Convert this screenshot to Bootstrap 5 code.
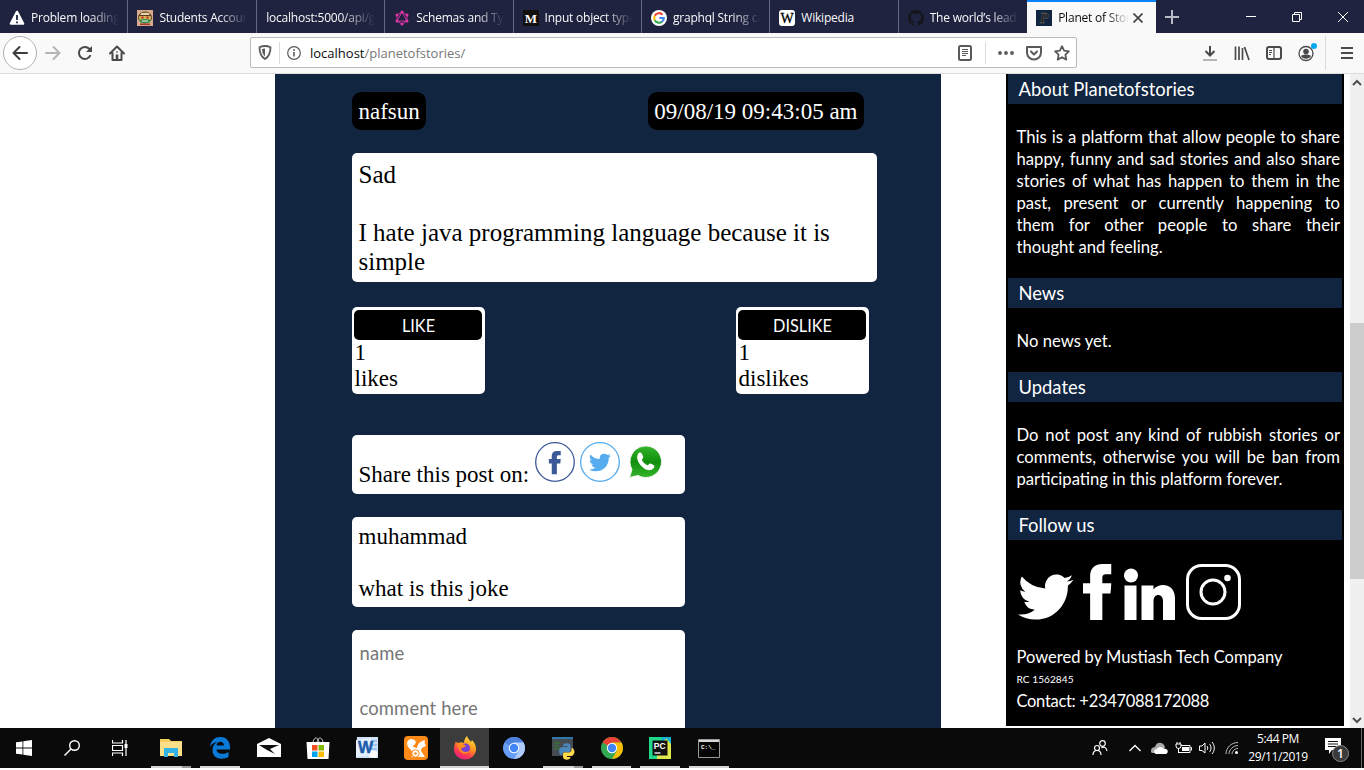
<!DOCTYPE html>
<html lang="en">
<head>
<meta charset="utf-8">
<title>Planet of Stories</title>
<link href="https://cdn.jsdelivr.net/npm/bootstrap@5.3.0/dist/css/bootstrap.min.css" rel="stylesheet">
<script src="https://cdn.jsdelivr.net/npm/bootstrap@5.3.0/dist/js/bootstrap.bundle.min.js"></script>
<style>
:root{--navy:#112540;--chrome:#f9f9fa;--ui:"Open Sans","Noto Sans",sans-serif;--body:Lato,"Open Sans",sans-serif;--serif:"Liberation Serif",serif}
body{width:1364px;height:770px;overflow:hidden;background:#fff;font-family:var(--ui);color:#000}
svg{display:block;flex:none}
.tabstrip{height:33px;background:#202340}
.tab-item{width:128.4px;height:33px;padding:2px 0 0 9px;color:#f9f9fa;font-size:12px;border-right:1px solid #666880}
.tab-item span{flex:1;min-width:0;margin-left:6px;margin-right:9px;white-space:nowrap;overflow:hidden;letter-spacing:-.22px;-webkit-mask-image:linear-gradient(90deg,#000 68%,transparent 100%);mask-image:linear-gradient(90deg,#000 68%,transparent 100%)}
.tab-item span.whole{-webkit-mask-image:none;mask-image:none}
.tab-item.current{background:var(--chrome);color:#0c0c0d;border-right:0;box-shadow:inset 0 2px #0a84ff}
.tab-item.before{border-right:0}
.tab-item.current span{margin-right:4px}
.tab-item.current .close-x{margin-right:13px}
.win-btns{gap:36px;margin-right:16px}
.toolbar{height:41px;background:var(--chrome);border-bottom:1px solid #dcdcde}
.tool{width:32px;height:32px}
.back-btn{width:34px;height:34px;border:1px solid #b1b1b3;border-radius:50%;background:#fff;margin-left:3px}
.address{width:827px;height:31px;border:1px solid #bbb;border-radius:2px;background:#fff;margin-left:117px;margin-bottom:1px}
.rule{width:1px;height:22px;background:#dadadc}
.rule.tall{height:34px;margin:0 5px 0 3px}
.url{font-size:13px;color:#777;margin:2px 0 0 9px}
.url b{font-weight:400;color:#0c0c0d}
.viewport{height:654px;overflow:hidden}
.story-col{width:666px;margin-left:275px;padding:18px 64px 0 77px;background:var(--navy);font-family:var(--serif);font-size:23px;line-height:26px}
.tag{height:38px;padding:7px 6.5px;background:#000;color:#fff;border-radius:9px}
.panel{background:#fff;border-radius:5px}
.post{height:129px;margin-top:23px;padding:7px 6.5px;font-size:25px;line-height:29px}
.vote{width:133px;height:87px;padding:3px 2.5px 0}
.vote button{display:block;width:128px;height:30px;margin-left:-.5px;border:0;border-radius:5px;background:#000;color:#fff;font:16.3px/31px var(--body);padding:0 0 0 1px}
.share{width:333px;height:59px;margin-top:41px;padding:7px 6.5px}
.share svg+svg{margin-left:5px}
.remark{width:333px;height:90px;margin-top:23px;padding:7px 6.5px}
.reply{width:333px;height:200px;margin-top:23px;padding:10px 7.5px;font:18.4px/26px var(--body)}
.reply input{display:block;border:0;padding:0;height:26px;width:300px;margin-bottom:29px;outline:0;letter-spacing:.15px}
.reply input::placeholder{color:#757575;opacity:1}
.about-col{width:338px;height:652px;margin-left:65px;background:#000;color:#fff;font-family:var(--body);font-size:16.65px;line-height:22px;padding:0 2px}
.about-col h2{height:30px;margin:0;padding-left:10.5px;background:var(--navy);font-size:18.4px;font-weight:400;line-height:31px}
.about-col p{margin:0;padding:22px 2px 20px 8.5px;text-align:justify}
.credits{padding:26px 8.5px 0;font-size:16.5px}
.credits .reg{font-size:10.2px;line-height:23px}
.credits .phone{letter-spacing:-.3px;line-height:20px}
.scroll{width:14px;margin-left:6px;background:#f0f0f0}
.scroll .thumb{height:256px;background:#cdcdcd;margin-top:236px}
.taskbar{height:40px;background:#0a0a0a;color:#fff}
.app{width:48.95px;height:40px;position:relative}
.app.run::after{content:"";position:absolute;left:4.5px;right:4.5px;bottom:0;height:2px;background:#d5d5d5}
.app.stack::after{background:linear-gradient(90deg,#d5d5d5 78%,#999 78%)}
.app.front{background:#3c3c3c}
.app.front::after{left:0;right:0}
.clock{font-size:12px;line-height:18px;letter-spacing:-.42px;width:66px}
</style>
</head>
<body class="d-flex flex-column">
<svg width="0" height="0" class="position-absolute">
<symbol id="bird" viewBox="0 2 16 13"><path d="M5.026 15c6.038 0 9.341-5.003 9.341-9.334 0-.14 0-.282-.006-.422A6.685 6.685 0 0 0 16 3.542a6.658 6.658 0 0 1-1.889.518 3.301 3.301 0 0 0 1.447-1.817 6.533 6.533 0 0 1-2.087.793A3.286 3.286 0 0 0 7.875 6.03a9.325 9.325 0 0 1-6.767-3.429 3.289 3.289 0 0 0 1.018 4.382A3.323 3.323 0 0 1 .64 6.575v.045a3.288 3.288 0 0 0 2.632 3.218 3.203 3.203 0 0 1-.865.115 3.23 3.23 0 0 1-.614-.057 3.283 3.283 0 0 0 3.067 2.277A6.588 6.588 0 0 1 .78 13.58a6.32 6.32 0 0 1-.78-.045A9.344 9.344 0 0 0 5.026 15z"/></symbol>
<symbol id="fb" viewBox="0 0 28 55"><path d="M7 55V29H0V19h7v-7C7 4 12 0 19 0h9v10h-5c-3 0-4 1-4 4v5h9l-1 10h-8v26z"/></symbol>
</svg>

<nav class="tabstrip d-flex flex-shrink-0">
<div class="tab-item d-flex align-items-center"><svg width="16" height="16" viewBox="0 0 16 16"><path d="M8 2 14 13.5H2z" fill="#fff" stroke="#fff" stroke-width="2.6" stroke-linejoin="round"/><path d="M8 5v5M8 11.6v1.6" stroke="#202340" stroke-width="1.8"/></svg><span>Problem loading page</span></div>
<div class="tab-item d-flex align-items-center"><svg width="16" height="16" viewBox="0 0 16 16"><path fill="#d9a98b" d="M0 0h16v16H0z"/><ellipse cx="8" cy="7.500" rx="6.500" ry="5.500" fill="#d9b45e" stroke="#4d3b25"/><path d="M2 5.500h12" stroke="#5b3a22"/><path d="M4 4h8" stroke="#e8e0c0" stroke-width="1.5"/><circle cx="5.500" cy="7.500" r="1.300" fill="#b9442f"/><circle cx="10.500" cy="7.500" r="1.300" fill="#b9442f"/><path d="M2 10c3-1.500 9-1.500 12 0l-2 3H4z" fill="#3d8f4a"/><path d="M5 11h6" stroke="#e9efe0"/><path d="M3 14.300h10" stroke="#a43b2c" stroke-width="1.500"/></svg><span>Students Accounts</span></div>
<div class="tab-item d-flex align-items-center"><span style="margin-left:.5px">localhost:5000/api/graphql</span></div>
<div class="tab-item d-flex align-items-center"><svg width="16" height="16" viewBox="0 0 16 16" fill="#e535ab" stroke="#e535ab"><path d="M8 2 13 5v6l-5 3-5-3V5zM8 2l5 9H3z" fill="none" stroke-width=".9"/><g stroke="none"><circle cx="8" cy="2" r="1.5"/><circle cx="13" cy="5" r="1.5"/><circle cx="13" cy="11" r="1.5"/><circle cx="8" cy="14" r="1.5"/><circle cx="3" cy="11" r="1.5"/><circle cx="3" cy="5" r="1.5"/></g></svg><span>Schemas and Types</span></div>
<div class="tab-item d-flex align-items-center"><svg width="16" height="16"><path d="M0 0h16v16H0z" fill="#12100e"/><text x="8" y="12.5" text-anchor="middle" font-family="Liberation Serif" font-weight="700" font-size="13" fill="#fff">M</text></svg><span>Input object types</span></div>
<div class="tab-item d-flex align-items-center"><svg width="16" height="16" viewBox="0 0 16 16" fill="none" stroke-width="2.2"><circle cx="8" cy="8" r="8" fill="#fff"/><path d="M11.5 4.7A4.8 4.8 0 0 0 3.8 5.7" stroke="#ea4335"/><path d="M3.8 5.7a4.8 4.8 0 0 0 0 4.6" stroke="#fbbc05"/><path d="M3.8 10.3a4.8 4.8 0 0 0 7.4 1.2" stroke="#34a853"/><path d="M11.2 11.5A4.8 4.8 0 0 0 12.8 8H8.3" stroke="#4285f4"/></svg><span>graphql String cannot represent</span></div>
<div class="tab-item d-flex align-items-center"><svg width="16" height="16"><rect width="16" height="16" rx="3" fill="#fff"/><text x="8" y="12.6" text-anchor="middle" font-family="Liberation Serif" font-size="14" fill="#000" stroke="#000" stroke-width=".3">W</text></svg><span class="whole">Wikipedia</span></div>
<div class="tab-item before d-flex align-items-center"><svg width="16" height="16" viewBox="0 0 16 16" fill="#15161c"><path d="M8 0C3.58 0 0 3.58 0 8c0 3.54 2.29 6.53 5.47 7.59.4.07.55-.17.55-.38 0-.19-.01-.82-.01-1.49-2.01.37-2.53-.49-2.69-.94-.09-.23-.48-.94-.82-1.13-.28-.15-.68-.52-.01-.53.63-.01 1.08.58 1.23.82.72 1.21 1.87.87 2.33.66.07-.52.28-.87.51-1.07-1.78-.2-3.64-.89-3.64-3.95 0-.87.31-1.59.82-2.15-.08-.2-.36-1.02.08-2.12 0 0 .67-.21 2.2.82.64-.18 1.32-.27 2-.27.68 0 1.36.09 2 .27 1.53-1.04 2.2-.82 2.2-.82.44 1.1.16 1.92.08 2.12.51.56.82 1.27.82 2.15 0 3.07-1.87 3.75-3.65 3.95.29.25.54.73.54 1.48 0 1.07-.01 1.93-.01 2.2 0 .21.15.46.55.38A8.012 8.012 0 0 0 16 8c0-4.42-3.58-8-8-8z"/></svg><span>The world’s leading</span></div>
<div class="tab-item current d-flex align-items-center"><svg width="16" height="16"><path d="M0 0h16v16H0z" fill="#112540"/><text x="8" y="13" text-anchor="middle" font-family="Liberation Serif" font-weight="700" font-style="italic" font-size="14" fill="#1d1c1a" stroke="#77736a" stroke-width=".4">P</text></svg><span>Planet of Stories</span><svg class="close-x" width="10" height="10"><path d="m.500.500 9 9M9.500.500l-9 9" stroke="#444" stroke-width="1.7"/></svg></div>
<div class="d-flex align-items-center flex-grow-1"><svg class="ms-2" width="16" height="16"><path d="M8 1v14M1 8h14" stroke="#b9bac6" stroke-width="2"/></svg>
<div class="win-btns ms-auto d-flex align-items-center"><svg width="10" height="10"><path d="M0 4.500h10" stroke="#fff"/></svg><svg width="10" height="10" fill="none" stroke="#fff"><path d="M.5 2.500h7v7h-7zM2.500 2.500v-2h7v7h-2"/></svg><svg width="10" height="10"><path d="m0 0 10 10M10 0 0 10" stroke="#fff"/></svg></div></div>
</nav>

<div class="toolbar d-flex align-items-center flex-shrink-0">
<div class="back-btn d-flex align-items-center justify-content-center"><svg width="16" height="16" fill="none" stroke="#3d3d40" stroke-width="2" stroke-linecap="round" stroke-linejoin="round"><path d="M15 8H1.500M7.500 2 1.500 8l6 6"/></svg></div>
<div class="tool d-flex align-items-center justify-content-center"><svg width="16" height="16" fill="none" stroke="#b5b5b8" stroke-width="2" stroke-linecap="round" stroke-linejoin="round"><path d="M1 8h13.500M8.500 2l6 6-6 6"/></svg></div>
<div class="tool d-flex align-items-center justify-content-center"><svg width="16" height="16" fill="none" stroke="#4a4a4d" stroke-width="2"><path d="M13.500 10.200A6 6 0 1 1 12.300 3.800L14 6"/><path d="M15 1v6H9z" fill="#4a4a4d" stroke="none"/></svg></div>
<div class="tool d-flex align-items-center justify-content-center"><svg width="16" height="16" fill="none" stroke="#4a4a4d" stroke-width="2" stroke-linejoin="round"><path d="M1 8.500 8 1.500l7 7M3.500 8v7h9V8" stroke-linecap="round"/><path d="M8 9.500V15" stroke-width="2.600"/><path d="M7 7h2" stroke-width="1"/></svg></div>
<div class="address d-flex align-items-center">
<svg width="14" height="15" style="margin-left:7px" viewBox="0 0 14 15"><path d="M7 1c2 0 4 .5 5.500 1.200 0 5-.8 9-5.500 11.800C2.300 11.200 1.500 7.200 1.500 2.200 3 1.500 5 1 7 1z" fill="none" stroke="#5a5a5d" stroke-width="1.800"/><path d="M7 3.500v8c-2-1.600-3-4-3-7.400z" fill="#5a5a5d"/></svg>
<div class="rule" style="margin-left:7px"></div>
<svg width="14" height="14" style="margin-left:7px" fill="none" stroke="#5a5a5d"><circle cx="7" cy="7" r="6.300" stroke-width="1.200"/><path d="M7 6v4.500M7 3.300v1.600" stroke-width="1.600"/></svg>
<div class="url"><b>localhost</b>/planetofstories/</div>
<div class="ms-auto d-flex align-items-center" style="margin-right:6px">
<svg width="14" height="16" fill="none" stroke="#5a5a5d"><rect x="1" y="1" width="12" height="14" rx="1.500" stroke-width="2"/><path d="M4 4.500h6M4 6.500h6M4 8.500h6M4 10.500h4"/></svg>
<div class="rule" style="margin:0 12px 0 13px"></div>
<svg width="16" height="16" fill="#5a5a5d"><circle cx="2" cy="8" r="1.900"/><circle cx="8" cy="8" r="1.900"/><circle cx="14" cy="8" r="1.900"/></svg>
<svg style="margin:0 12px" width="16" height="16" fill="none" stroke="#5a5a5d" stroke-width="2" stroke-linecap="round" stroke-linejoin="round"><path d="M1 2h14v5.500a7 7 0 0 1-14 0z"/><path d="m5 6.500 3 3 3-3"/></svg>
<svg width="16" height="16" fill="none" stroke="#5a5a5d" stroke-width="1.800" stroke-linejoin="round"><path d="m8 1.200 2.100 4.500 4.800.6-3.500 3.400.9 4.900L8 12.200l-4.300 2.400.9-4.900L1.100 6.300l4.800-.6z"/></svg></div>
</div>
<div class="ms-auto d-flex align-items-center">
<div class="tool d-flex align-items-center justify-content-center"><svg width="16" height="16" fill="none" stroke="#4a4a4d" stroke-width="2"><path d="M8 1v9M3.500 6 8 10.500 12.500 6"/><path d="M1 15h14" stroke="#b5b5b8"/></svg></div>
<div class="tool d-flex align-items-center justify-content-center"><svg width="16" height="16" fill="none" stroke="#4a4a4d" stroke-width="1.700"><path d="M1.500 1.500V15M5 1.500V15M8.500 3v12M10.500 2l4.500 13"/></svg></div>
<div class="tool d-flex align-items-center justify-content-center"><svg width="16" height="14" fill="none" stroke="#4a4a4d"><rect x="1" y="1" width="14" height="12" rx="2" stroke-width="2"/><path d="M8 1v12" stroke-width="1.200"/><path d="M3 4.500h3M3 6.500h3M3 8.500h2"/></svg></div>
<div class="tool d-flex align-items-center justify-content-center"><svg width="22" height="22" viewBox="0 0 22 22"><circle cx="11" cy="11.500" r="7" fill="none" stroke="#4a4a4d" stroke-width="1.300"/><circle cx="11" cy="9.500" r="2.800" fill="#4a4a4d"/><path d="M6 14c2-2 8-2 10 0-1.500 3.500-8.500 3.500-10 0z" fill="#4a4a4d"/><circle cx="19" cy="4" r="3" fill="#00a8f3"/></svg></div>
<div class="rule tall"></div>
<div class="tool d-flex align-items-center justify-content-center" style="margin-right:1px"><svg width="14" height="12"><path d="M1 1h12M1 6h12M1 11h12" stroke="#4a4a4d" stroke-width="2"/></svg></div>
</div>
</div>

<main class="viewport d-flex flex-shrink-0">
<section class="story-col">
<div class="d-flex justify-content-between" style="padding-right:13px"><div class="tag">nafsun</div><div class="tag">09/08/19 09:43:05 am</div></div>
<article class="panel post">Sad<br><br>I hate java programming language because it is simple</article>
<div class="d-flex justify-content-between" style="margin-top:25px;padding-right:8px">
<div class="panel vote"><button type="button">LIKE</button><div>1</div><div>likes</div></div>
<div class="panel vote"><button type="button">DISLIKE</button><div>1</div><div>dislikes</div></div></div>
<div class="panel share d-flex"><span style="padding-top:20px;width:176.500px" class="text-nowrap">Share this post on:</span>
<svg width="40" height="40"><circle cx="20" cy="20" r="19.300" fill="none" stroke="#3b5998" stroke-width="1.300"/><use href="#fb" x="13.500" y="9" width="12.500" height="23.500" fill="#3b5998"/></svg>
<svg width="40" height="40"><circle cx="20" cy="20" r="19.300" fill="none" stroke="#55acee" stroke-width="1.300"/><use href="#bird" x="9" y="11.500" width="22" height="18" fill="#55acee"/></svg>
<svg width="38" height="38" style="margin-left:7px" viewBox="0 0 38 38"><defs><linearGradient id="wa" x2="0" y2="1"><stop stop-color="#35b52b"/><stop offset=".5" stop-color="#0f8f0c"/><stop offset="1" stop-color="#35b52b"/></linearGradient></defs><path d="M2.500 35.500l2.500-8A15.800 15.800 0 1 1 11 33.500z" fill="url(#wa)" stroke="#f2f2f2"/><path d="M11 12c1-2 3-2 4 0l1.300 3c.4 1-1.600 2-1.300 3 1 2.300 3 4.200 5.300 5.200 1.200.4 1.800-2 3.200-1.600l3 1.500c1.500.7.800 3-.6 4C19 32 7 19 11 12z" fill="#fff"/></svg></div>
<div class="panel remark">muhammad<br><br>what is this joke</div>
<form class="panel reply"><input placeholder="name"><input placeholder="comment here"></form>
</section>
<aside class="about-col">
<h2>About Planetofstories</h2>
<p>This is a platform that allow people to share happy, funny and sad stories and also share stories of what has happen to them in the past, present or currently happening to them for other people to share their thought&nbsp;and feeling.</p>
<h2>News</h2><p>No news yet.</p>
<h2>Updates</h2><p>Do not post any kind of rubbish stories or comments, otherwise you will be ban from participating in this platform forever.</p>
<h2>Follow us</h2>
<div class="d-flex align-items-end" style="height:79.500px;padding-left:10px">
<svg width="55.500" height="46" fill="#fff"><use href="#bird" width="55.500" height="46"/></svg>
<svg width="28.500" height="56" fill="#fff" style="margin-left:9.500px"><use href="#fb" width="28.500" height="56"/></svg>
<svg width="52" height="52" fill="#fff" style="margin-left:12.500px"><circle cx="7" cy="7.500" r="7"/><path d="M.500 17.500h12V52h-12zM17.500 17.500h12v4c5-7 21.500-7 21.500 9V52H39V33c0-8-9.500-8-9.500 0v19h-12z"/></svg>
<svg width="55" height="56" fill="none" stroke="#fff" stroke-width="3" style="margin-left:10px"><rect x="1.500" y="1.500" width="52" height="53" rx="14"/><circle cx="27" cy="28" r="12"/><circle cx="41.500" cy="14" r="3.300" fill="#fff" stroke="none"/></svg></div>
<div class="credits">Powered by Mustiash Tech Company<div class="reg">RC 1562845</div><div class="phone">Contact: +2347088172088</div></div>
</aside>
<div class="scroll d-flex flex-column align-items-center"><svg width="10" height="8" style="margin-top:5px" fill="none" stroke="#505050" stroke-width="2"><path d="m1 6 4-4 4 4"/></svg><div class="thumb w-100"></div><svg class="mt-auto" width="10" height="8" style="margin-bottom:4px" fill="none" stroke="#505050" stroke-width="2"><path d="m1 2 4 4 4-4"/></svg></div>
</main>

<footer class="taskbar d-flex align-items-center flex-shrink-0">
<div class="d-flex align-items-center flex-shrink-0" style="width:146.600px;padding-left:16px">
<svg width="16" height="16" fill="#fff"><path d="M0 2.300 6.500 1.400v6.100H0zM7.300 1.300 16 0v7.500H7.300zM0 8.400h6.500v6.200L0 13.700zM7.300 8.400H16V16l-8.700-1.200z"/></svg>
<svg width="16" height="16" style="margin-left:32px" fill="none" stroke="#fff" stroke-width="1.400"><circle cx="10.500" cy="5.500" r="4.800"/><path d="M7 9 .500 15.500"/></svg>
<svg width="16" height="16" style="margin-left:32px" fill="none" stroke="#fff" stroke-width="1.200"><path d="M.500 0v3h10V0M.500 5.500h10v5H.500zM.500 16v-3h10v3M14 0v16"/><path d="M14 4v4" stroke-width="3"/></svg></div>
<div class="app run stack d-flex align-items-center justify-content-center"><svg width="22" height="20"><path d="M0 1h9l2 2h11v15H0z" fill="#f6cf61"/><path d="M0 4h22v14H0z" fill="#ffe08a"/><path d="M4 19v-9h14v9h-4v-4H8v4z" fill="#34b3e6"/></svg></div>
<div class="app run d-flex align-items-center justify-content-center"><svg width="22" height="22"><path d="M1 10C2 3 6 0 11.500 0 18 0 21 5 21 10v2.500H7.500c.5 5 7.500 5.500 12 2.500v5c-6 3-16 2.500-16-7 0-4 2-6.500 5-8C5 5.500 2.500 7 1 10zm6.500-1.500H15c0-5-7-5-7.500 0z" fill="#0a7ad8"/></svg></div>
<div class="app d-flex align-items-center justify-content-center"><svg width="24" height="20"><path d="M0 6 12 0l12 6v13H0z" fill="#fff"/><path d="M2 7h20l-9 4 5 5-8-4z" fill="#111"/></svg></div>
<div class="app d-flex align-items-center justify-content-center"><svg width="24" height="24"><path d="M7 8C7 0 13 0 13 8M11 8c0-8 6-8 6 0" fill="none" stroke="#ddd"/><path d="M.500 6h23l-1 17h-21z" fill="#fff"/><path d="M6 9h5.500v5.500H6z" fill="#f25022"/><path d="M12.500 9H18v5.500h-5.500z" fill="#7fba00"/><path d="M6 15.500h5.500V21H6z" fill="#00a4ef"/><path d="M12.500 15.500H18V21h-5.500z" fill="#ffb900"/></svg></div>
<div class="app d-flex align-items-center justify-content-center"><svg width="22" height="22"><path d="M1 0h21v21H0z" fill="#cfe2f8"/><path d="M16 4h5M16 8h5M16 12h5" stroke="#78a5dc"/><path d="M0 3 15 1v17L0 20z" fill="#e6f1ff"/><text x="2" y="16" font-family="Liberation Sans" font-weight="700" font-size="16" fill="#1c5cab" stroke="#1c5cab" stroke-width=".5">W</text><path d="m15 13 7 2-2 6-7-1z" fill="#fff"/></svg></div>
<div class="app d-flex align-items-center justify-content-center"><svg width="24" height="24"><rect width="24" height="24" rx="4" fill="#ff8a17"/><path d="M13 12c1-5 4-7 8-8-1 3 0 4 1 6-3 1-5 2-5 5l4 6H7c3-2 1-6-1-8-4-3-4-9 1-10 5 0 6 4 3 6-2 1-1 2 3 3z" fill="#fff"/><circle cx="11.500" cy="17.500" r="3.700" fill="#fff" stroke="#ff8a17"/><circle cx="11.500" cy="17.500" r="1.300" fill="#ff8a17"/></svg></div>
<div class="app run front d-flex align-items-center justify-content-center"><svg width="24" height="24"><defs><linearGradient id="ff" x1=".8" x2=".3" y2="1"><stop stop-color="#ffe83d"/><stop offset=".45" stop-color="#ff9420"/><stop offset=".75" stop-color="#ff3951"/><stop offset="1" stop-color="#e51f80"/></linearGradient></defs><path d="M3 5c0 1 1 2 2 2 2-1 4-1 6 0 0-3 1-5 3-7 1 3 3 4 4 6l1-2c3 3 4 6 4 9a11 10.500 0 0 1-22 0c0-3 1-5 2-8z" fill="url(#ff)"/><circle cx="12.500" cy="12" r="4.500" fill="#7542d5"/><path d="M5 8c3-1 6 0 8 2-1 2-4 1-5 3 1 3 5 4 8 2-1 4-11 5-11-7z" fill="#ff8b20"/></svg></div>
<div class="app d-flex align-items-center justify-content-center"><svg width="22" height="22"><circle cx="11" cy="11" r="11" fill="#669df6"/><path d="M11 11 1.500 5.500A11 11 0 0 1 20.500 5.500H11z" fill="#4f82df"/><path d="M11 22A11 11 0 0 0 20.500 5.500H11l5 8z" fill="#aecbfa"/><circle cx="11" cy="11" r="5.200" fill="#fff"/><circle cx="11" cy="11" r="4.200" fill="#4285f4"/></svg></div>
<div class="app run stack d-flex align-items-center justify-content-center"><svg width="24" height="24"><path d="M1 1h21v19H1z" fill="#454b50"/><path d="M1 1h21v2H1z" fill="#2f78aa"/><path d="M3 7h6M3 10h5M3 13h6" stroke="#3c663f" stroke-width="2"/><path d="M11.500 11h5v-1H12V9.500c0-3 7.500-3 7.500 0V14c0 1.500-1 2-2 2h-4c-1.500 0-2.500 1-2.500 2.500V19c-4 0-4-8 .5-8z" fill="#4b87bb"/><path d="M20.500 12c4 0 4 8-.5 8h-4v1h3.500c0 3.500-7.500 3.500-7.500 0v-3c0-1 .5-1.500 1.500-1.500h4.500c1.500 0 2.500-1 2.500-2.500z" fill="#ffd94a"/></svg></div>
<div class="app run d-flex align-items-center justify-content-center"><svg width="22" height="22"><circle cx="11" cy="11" r="11" fill="#34a853"/><path d="M11 11 1.500 5.500A11 11 0 0 1 20.500 5.500H11z" fill="#ea4335"/><path d="M11 22A11 11 0 0 0 20.500 5.500H11l5 8z" fill="#fbbc05"/><circle cx="11" cy="11" r="5.200" fill="#fff"/><circle cx="11" cy="11" r="4.200" fill="#4285f4"/></svg></div>
<div class="app run d-flex align-items-center justify-content-center"><svg width="22" height="22"><path d="M0 0h22v22H0z" fill="#21d789"/><path d="M13 0h9v12H10z" fill="#12b4d6"/><path d="M19 0h3v22H6L0 18z" fill="#dfe94e"/><path d="M22 0v7l-6-7z" fill="#12b4d6"/><path d="M0 0h8v22H0z" fill="#21d789"/><path d="M3.500 3.500h15v15h-15z" fill="#111"/><text x="4.800" y="11.500" font-family="Liberation Sans" font-weight="700" font-size="8.500" fill="#fff">PC</text><path d="M5.500 16h6" stroke="#fff" stroke-width="1.300"/></svg></div>
<div class="app run d-flex align-items-center justify-content-center"><svg width="22" height="19"><path d="M.500.500h21v18H.500z" fill="#050505" stroke="#999"/><path d="M1 1h20v2H1z" fill="#d5d9dd"/><text x="3" y="10" font-family="Liberation Mono" font-size="6" font-weight="700" fill="#fff">C:\_</text></svg></div>
<div class="ms-auto d-flex align-items-center">
<svg width="16" height="16" fill="none" stroke="#fff" stroke-width="1.200"><circle cx="10.500" cy="3.500" r="2.800"/><circle cx="5" cy="8" r="2.500"/><path d="M1 15c0-6 8-6 8 0M9.500 8c3-2 5 0 5.500 3"/></svg>
<svg width="12" height="8" style="margin-left:21px" fill="none" stroke="#fff" stroke-width="1.300"><path d="m.500 7 5.500-5.500L11.500 7"/></svg>
<svg width="17" height="12" style="margin-left:10px"><path d="M0 9c0-3 2-4 4-4 1-5 8-6 10 0l-2 6H2C0 11 0 10 0 9z" fill="#aaa"/><path d="M5 12c-3-1-2-5 1-5 2-3 6-2 7 0 4-1 5 4 2 5z" fill="#fff"/></svg>
<svg width="17" height="14" style="margin-left:7px" fill="none" stroke="#fff"><path d="M6 4.500h9v7H4M15.500 6.500h1v3"/><path d="M7 6h7v4H7z" fill="#fff" stroke="none"/><path d="M1 3h5v2a2.500 2.500 0 0 1-5 0zM2 1v2M5 1v2M3.500 7v5"/></svg>
<svg width="17" height="14" style="margin-left:7px" fill="none" stroke="#fff"><path d="M.500 5h2.500l3-3v10L3 9.500H.500zM8 5c1 1 1 3 0 4M10.500 3c2 2 2 6 0 8M13 1c3 3 3 9 0 12"/></svg>
<svg width="14" height="14" style="margin-left:9px" fill="none" stroke="#bbb"><path d="M1 13C1 7 6 1.500 13 1.500M4 13c0-4 4-8.500 9-8.500M7 13c0-3 3-5.500 6-5.500"/><circle cx="11.500" cy="11.500" r="1.500" fill="#fff" stroke="none"/></svg>
<div class="clock text-center text-nowrap" style="margin-left:6px">5:44 PM<br>29/11/2019</div>
<svg width="25" height="24" style="margin:4px 0 0 14px"><path d="M0 0h16v12H7l-3 4v-4H0z" fill="#fff"/><path d="M3 3.500h10M3 6h10M3 8.500h8" stroke="#111"/><circle cx="15.500" cy="15.500" r="8" fill="#3a3a3a" stroke="#888"/><text x="15.500" y="20" text-anchor="middle" font-size="12" font-weight="600" font-family="Open Sans" fill="#fff">1</text></svg>
<div style="width:1px;height:40px;background:#666;margin:0 2px 0 11px"></div></div>
</footer>
</body>
</html>
